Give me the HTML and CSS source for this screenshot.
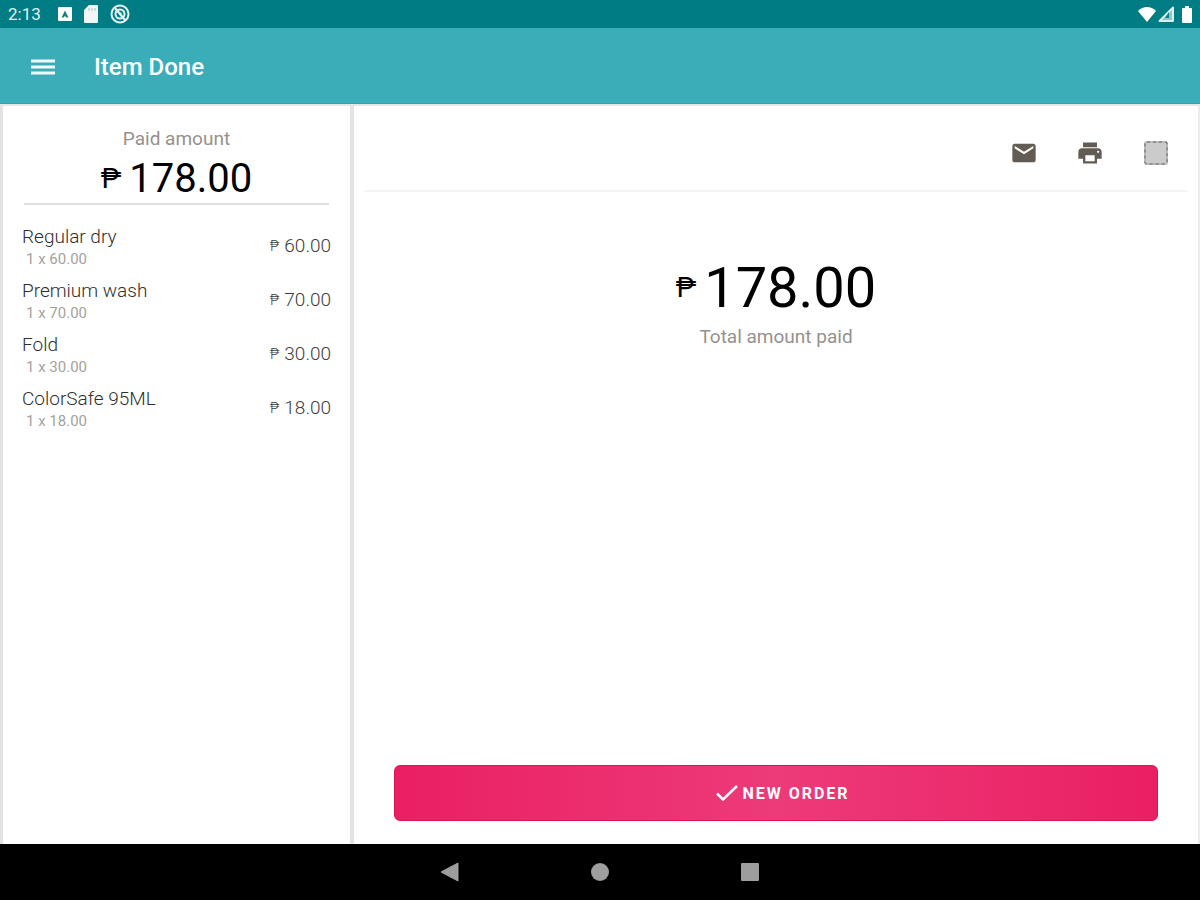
FILE: index.html
```html
<!doctype html>
<html lang="en">

<head>
    <meta charset="UTF-8">
    <meta name="viewport" content="width=device-width, initial-scale=1.0">
    <title>Item Done</title>
    <link rel="stylesheet" href="styles.css">
</head>

<body>
    <div class="status-bar">
        <div class="status-left">
            <span class="clock">2:13</span>
            <svg width="14" height="14" viewBox="0 0 14 14">
                <rect width="14" height="14" rx="1" fill="#fff"/>
                <path d="M3.5 10.5 7 3.5l3.5 7H8.5L7 9l-1.500 1.500z" fill="#1b7f84"/>
            </svg>
            <svg width="14" height="18" viewBox="0 0 14 18">
                <path d="M5 0h8a1 1 0 0 1 1 1v16a1 1 0 0 1-1 1H1a1 1 0 0 1-1-1V5z" fill="#f1f6f5"/>
                <path d="M5 3v3M8 3v3M11 3v3" stroke="#9fc9ca" stroke-width="1"/>
            </svg>
            <svg width="20" height="20" viewBox="0 0 20 20" fill="none" stroke="#e6f3f3">
                <circle cx="10" cy="10" r="8.500" stroke-width="2"/>
                <circle cx="10" cy="10" r="4.500" stroke-width="2"/>
                <path d="M5 4l10 12" stroke-width="2"/>
                <path d="M9 8l3 1-2 3z" fill="#e6f3f3" stroke="none"/>
            </svg>
        </div>
        <div class="status-right">
            <svg width="18" height="15" viewBox="0 0 18 15">
                <path d="M0 4C5-1.200 13-1.200 18 4L9 15z" fill="#fff"/>
            </svg>
            <svg width="16" height="16" viewBox="0 0 16 16">
                <path d="M15 1.500V15H1.500z" fill="#8fc6c9" stroke="#dceeee" stroke-width="2" stroke-linejoin="round"/>
                <path d="M11 6v6H7z" fill="#0a7c84"/>
            </svg>
            <svg class="battery" width="10" height="17" viewBox="0 0 10 17">
                <path d="M3 0h4v2h2a1 1 0 0 1 1 1v13a1 1 0 0 1-1 1H1a1 1 0 0 1-1-1V3a1 1 0 0 1 1-1h2z" fill="#fff"/>
            </svg>
        </div>
    </div>

    <header class="app-bar">
        <button class="icon-button" type="button" aria-label="Menu">
            <svg width="24" height="16" viewBox="0 0 24 16">
                <path d="M0 2h24M0 8h24M0 14h24" stroke="#eefafa" stroke-width="3"/>
            </svg>
        </button>
        <h1>Item Done</h1>
    </header>

    <main class="content">
        <section class="receipt">
            <div class="paid">
                <span class="caption">Paid amount</span>
                <div class="amount"><span class="peso">₱</span>178.00</div>
            </div>
            <ul class="items">
                <li>
                    <div><span class="item-name">Regular dry</span><span class="item-qty">1 x 60.00</span></div>
                    <span class="item-price"><span class="peso">₱</span>60.00</span>
                </li>
                <li>
                    <div><span class="item-name">Premium wash</span><span class="item-qty">1 x 70.00</span></div>
                    <span class="item-price"><span class="peso">₱</span>70.00</span>
                </li>
                <li>
                    <div><span class="item-name">Fold</span><span class="item-qty">1 x 30.00</span></div>
                    <span class="item-price"><span class="peso">₱</span>30.00</span>
                </li>
                <li>
                    <div><span class="item-name">ColorSafe 95ML</span><span class="item-qty">1 x 18.00</span></div>
                    <span class="item-price"><span class="peso">₱</span>18.00</span>
                </li>
            </ul>
        </section>

        <section class="summary">
            <div class="toolbar">
                <button class="icon-button" type="button" aria-label="Email receipt">
                    <svg width="28" height="28" viewBox="0 0 24 24" fill="#625c54">
                        <path d="M20 4H4c-1.100 0-2 .9-2 2v12c0 1.100.9 2 2 2h16c1.100 0 2-.9 2-2V6c0-1.100-.9-2-2-2zm0 4l-8 5-8-5V6l8 5 8-5v2z"/>
                    </svg>
                </button>
                <button class="icon-button" type="button" aria-label="Print receipt">
                    <svg width="28" height="28" viewBox="0 0 24 24" fill="#625c54">
                        <path d="M19 8H5c-1.660 0-3 1.340-3 3v6h4v4h12v-4h4v-6c0-1.660-1.340-3-3-3zm-3 11H8v-5h8v5zm3-7c-.55 0-1-.45-1-1s.45-1 1-1 1 .45 1 1-.45 1-1 1zm-1-9H6v4h12V3z"/>
                    </svg>
                </button>
                <button class="icon-button" type="button" aria-label="Select">
                    <svg width="28" height="28" viewBox="0 0 28 28">
                        <rect x="3" y="3" width="22" height="22" rx="2" fill="#cbcbcb" stroke="#b9b9b9" stroke-width="2"/>
                        <rect x="3" y="3" width="22" height="22" rx="2" fill="none" stroke="#85827e" stroke-width="1.500" stroke-dasharray="3 3"/>
                    </svg>
                </button>
            </div>
            <div class="total">
                <div class="amount amount-large"><span class="peso">₱</span>178.00</div>
                <span class="caption">Total amount paid</span>
            </div>
            <button class="new-order" type="button">
                <svg width="22" height="16" viewBox="0 0 22 16" fill="none" stroke="#fff" stroke-width="2.500">
                    <path d="M1 8.500l6 6L21 1"/>
                </svg>
                NEW ORDER
            </button>
        </section>
    </main>

    <nav class="nav-bar">
        <button class="icon-button" type="button" aria-label="Back">
            <svg width="20" height="20" viewBox="0 0 20 20"><path d="M18 1v18L1 10z" fill="#9e9e9e" stroke="#9e9e9e" stroke-linejoin="round"/></svg>
        </button>
        <button class="icon-button" type="button" aria-label="Home">
            <svg width="20" height="20" viewBox="0 0 20 20"><circle cx="10" cy="10" r="9" fill="#9e9e9e"/></svg>
        </button>
        <button class="icon-button" type="button" aria-label="Recent apps">
            <svg width="20" height="20" viewBox="0 0 20 20"><rect x="1" y="1" width="18" height="18" rx="1" fill="#9e9e9e"/></svg>
        </button>
    </nav>
</body>

</html>
```
FILE: styles.css
```css
* {
    box-sizing: border-box;
}

body {
    margin: 0;
    min-height: 100vh;
    display: flex;
    flex-direction: column;
    background-color: #fff;
    color: #000;
    font-family: Roboto, "Liberation Sans", sans-serif;
}

svg {
    display: block;
}

.icon-button {
    padding: 0;
    border: none;
    background: none;
    cursor: pointer;
}

.status-bar {
    height: 28px;
    padding: 0 8px;
    display: flex;
    align-items: center;
    justify-content: space-between;
    background-color: #007c84;
    color: #e0f0f0;
}

.status-left {
    display: flex;
    align-items: center;
    gap: 12px;
}

.clock {
    width: 38px;
    font-size: 17px;
    line-height: 28px;
}

.status-right {
    display: flex;
    align-items: center;
    gap: 2px;
}

.battery {
    margin-left: 6px;
}

.app-bar {
    height: 76px;
    padding: 2px 31px 0;
    display: flex;
    align-items: center;
    gap: 39px;
    background-color: #3badb9;
    border-bottom: 1px solid #2ea6ae;
    color: #fff;
}

.app-bar h1 {
    margin: 0;
    font-size: 24px;
    font-weight: 500;
    line-height: 32px;
}

.content {
    flex: 1;
    display: grid;
    grid-template-columns: 354px 1fr;
    border-top: 2px solid #e6e6e6;
}

.receipt {
    padding: 21px 19px;
    border-left: 3px solid #e2e2e2;
    border-right: 4px solid #e2e2e2;
}

.paid {
    margin: 0 2px;
    border-bottom: 2px solid #e0e0e0;
    text-align: center;
}

.caption {
    display: block;
    color: #96918d;
    font-size: 19px;
    line-height: 24px;
}

.amount {
    margin-top: 4px;
    display: flex;
    align-items: center;
    justify-content: center;
    gap: 8px;
    font-size: 40px;
    line-height: 48px;
}

.amount .peso {
    font-size: 28px;
}

.amount-large {
    margin: 0 0 5px;
    font-size: 56px;
    line-height: 64px;
}

.items {
    margin: 20px 0 0;
    padding: 0;
    list-style: none;
}

.items li {
    height: 54px;
    display: flex;
    align-items: flex-start;
    justify-content: space-between;
}

.item-name,
.item-qty {
    display: block;
}

.item-name {
    color: #302e2c;
    font-size: 19px;
    font-weight: 300;
    line-height: 24px;
}

.item-qty {
    padding-left: 4px;
    color: #a5a19e;
    font-size: 15px;
    line-height: 20px;
}

.item-price {
    display: flex;
    align-items: center;
    gap: 5px;
    color: #403d3b;
    font-size: 19px;
    font-weight: 300;
    line-height: 42px;
}

.item-price .peso {
    font-size: 14px;
}

.summary {
    padding: 0 10px 23px;
    display: flex;
    flex-direction: column;
    border-right: 2px solid #ececec;
}

.toolbar {
    height: 86px;
    padding: 10px 18px 0;
    display: flex;
    align-items: center;
    justify-content: flex-end;
    gap: 38px;
    border-bottom: 2px solid #f4f4f4;
}

.total {
    flex: 1;
    padding-top: 64px;
    text-align: center;
}

.new-order {
    height: 56px;
    margin: 0 30px;
    padding: 0 0 0 14px;
    display: flex;
    align-items: center;
    justify-content: center;
    gap: 4px;
    border: 1px solid #e2105c;
    border-radius: 6px;
    background: linear-gradient(to right, #ea1f63, #ed3a79, #ea1f63);
    background-origin: border-box;
    color: #fff;
    font-family: inherit;
    font-size: 16px;
    font-weight: 700;
    letter-spacing: 2px;
    cursor: pointer;
}

.nav-bar {
    height: 56px;
    display: flex;
    align-items: center;
    justify-content: center;
    gap: 130px;
    background-color: #000;
}
```
